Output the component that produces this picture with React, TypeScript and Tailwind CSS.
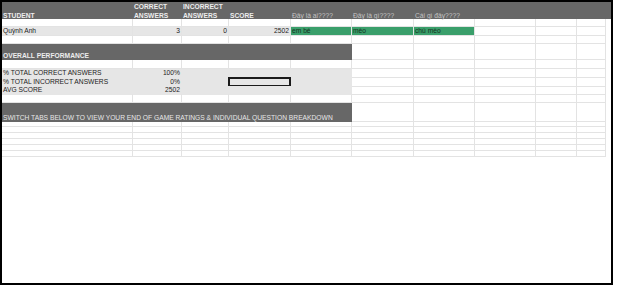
import React from "react";
import clsx from "clsx";

// Sheet column widths: A..J, as in the workbook view
const GRID =
  "grid grid-cols-[131px_49px_47px_62px_61px_62px_61px_61px_41px_29px]";

type CellProps = {
  children?: React.ReactNode;
  className?: string;
};

function Cell({ children, className }: CellProps) {
  return (
    <div
      className={clsx(
        "relative flex items-center overflow-visible whitespace-nowrap border-r border-b border-[#e3e3e3] px-px",
        className
      )}
    >
      {children}
    </div>
  );
}

function Blank({ n, className }: { n: number; className?: string }) {
  return (
    <>
      {Array.from({ length: n }).map((_, i) => (
        <Cell key={i} className={className} />
      ))}
    </>
  );
}

function HeaderLabel({ lines, className }: { lines: string[]; className?: string }) {
  return (
    <div className={clsx("flex flex-col justify-end px-px leading-[9px]", className)}>
      {lines.map((l) => (
        <span key={l}>{l}</span>
      ))}
    </div>
  );
}

export default function App() {
  return (
    <div className="h-[285px] w-[617px] bg-white">
      <div
        className="h-[285px] w-[613px] border-2 border-black bg-white text-[6.7px] text-[#222]"
        style={{ fontFamily: '"Liberation Sans", Arial, sans-serif' }}
      >
        {/* column headings */}
        <div className={clsx(GRID, "h-[17px] bg-[#676767] pb-px font-bold text-[#ededed]")}>
          <HeaderLabel lines={["STUDENT"]} />
          <HeaderLabel lines={["CORRECT", "ANSWERS"]} />
          <HeaderLabel lines={["INCORRECT", "ANSWERS"]} />
          <HeaderLabel lines={["SCORE"]} />
          <HeaderLabel lines={["Đây là ai????"]} className="font-normal text-[#c4c4c4]" />
          <HeaderLabel lines={["Đây là gì????"]} className="font-normal text-[#c4c4c4]" />
          <HeaderLabel lines={["Cái gì đây????"]} className="font-normal text-[#c4c4c4]" />
          <div />
          <div />
          <div />
        </div>

        <div className={clsx(GRID, "h-[8px]")}>
          <Blank n={10} />
        </div>

        {/* student row */}
        <div className={clsx(GRID, "h-[8px] leading-[8px]")}>
          <Cell className="bg-[#e6e6e6]">Quỳnh Anh</Cell>
          <Cell className="justify-end bg-[#e6e6e6]">3</Cell>
          <Cell className="justify-end bg-[#e6e6e6]">0</Cell>
          <Cell className="justify-end bg-[#e6e6e6]">2502</Cell>
          <Cell className="border-[#3a9f6b] bg-[#3a9f6b] text-[#16321f]">em bé</Cell>
          <Cell className="border-[#3a9f6b] bg-[#3a9f6b] text-[#16321f]">mèo</Cell>
          <Cell className="border-[#3a9f6b] bg-[#3a9f6b] text-[#16321f]">chú mèo</Cell>
          <Blank n={3} />
        </div>

        <div className={clsx(GRID, "h-[9px]")}>
          <Blank n={10} />
        </div>

        {/* overall performance banner */}
        <div className={clsx(GRID, "h-[16px]")}>
          <div className="col-span-5 flex items-end bg-[#676767] px-px font-bold leading-[8px] text-[#ededed]">
            OVERALL PERFORMANCE
          </div>
          <Blank n={5} />
        </div>

        <div className={clsx(GRID, "h-[9px]")}>
          <Blank n={10} />
        </div>

        <div className={clsx(GRID, "h-[9px] leading-[8px]")}>
          <Cell className="bg-[#e6e6e6] border-[#e6e6e6]">% TOTAL CORRECT ANSWERS</Cell>
          <Cell className="justify-end bg-[#e6e6e6] border-[#e6e6e6]">100%</Cell>
          <Blank n={3} className="bg-[#e6e6e6] border-[#e6e6e6]" />
          <Blank n={5} />
        </div>
        <div className={clsx(GRID, "h-[8px] leading-[8px]")}>
          <Cell className="bg-[#e6e6e6] border-[#e6e6e6]">% TOTAL INCORRECT ANSWERS</Cell>
          <Cell className="justify-end bg-[#e6e6e6] border-[#e6e6e6]">0%</Cell>
          <Cell className="bg-[#e6e6e6] border-[#e6e6e6]" />
          <Cell className="bg-[#e6e6e6] border-[#e6e6e6]">
            {/* active cell selection */}
            <div className="absolute -left-px -right-px -top-px -bottom-px border-2 border-[#1a1a1a]" />
          </Cell>
          <Cell className="bg-[#e6e6e6] border-[#e6e6e6]" />
          <Blank n={5} />
        </div>
        <div className={clsx(GRID, "h-[8px] leading-[8px]")}>
          <Cell className="bg-[#e6e6e6] border-[#e6e6e6]">AVG SCORE</Cell>
          <Cell className="justify-end bg-[#e6e6e6] border-[#e6e6e6]">2502</Cell>
          <Blank n={3} className="bg-[#e6e6e6] border-[#e6e6e6]" />
          <Blank n={5} />
        </div>

        <div className={clsx(GRID, "h-[9px]")}>
          <Blank n={10} />
        </div>

        {/* tabs hint banner */}
        <div className={clsx(GRID, "h-[19px]")}>
          <div className="col-span-5 flex items-end whitespace-nowrap bg-[#676767] px-px leading-[8px] text-[#e6e6e6]">
            SWITCH TABS BELOW TO VIEW YOUR END OF GAME RATINGS &amp; INDIVIDUAL QUESTION BREAKDOWN
          </div>
          <Blank n={5} />
        </div>

        {[5, 6, 6, 6, 6, 6].map((h, i) => (
          <div key={i} className={clsx(GRID, h === 5 ? "h-[5px]" : "h-[6px]")}>
            <Blank n={10} />
          </div>
        ))}
      </div>
    </div>
  );
}
